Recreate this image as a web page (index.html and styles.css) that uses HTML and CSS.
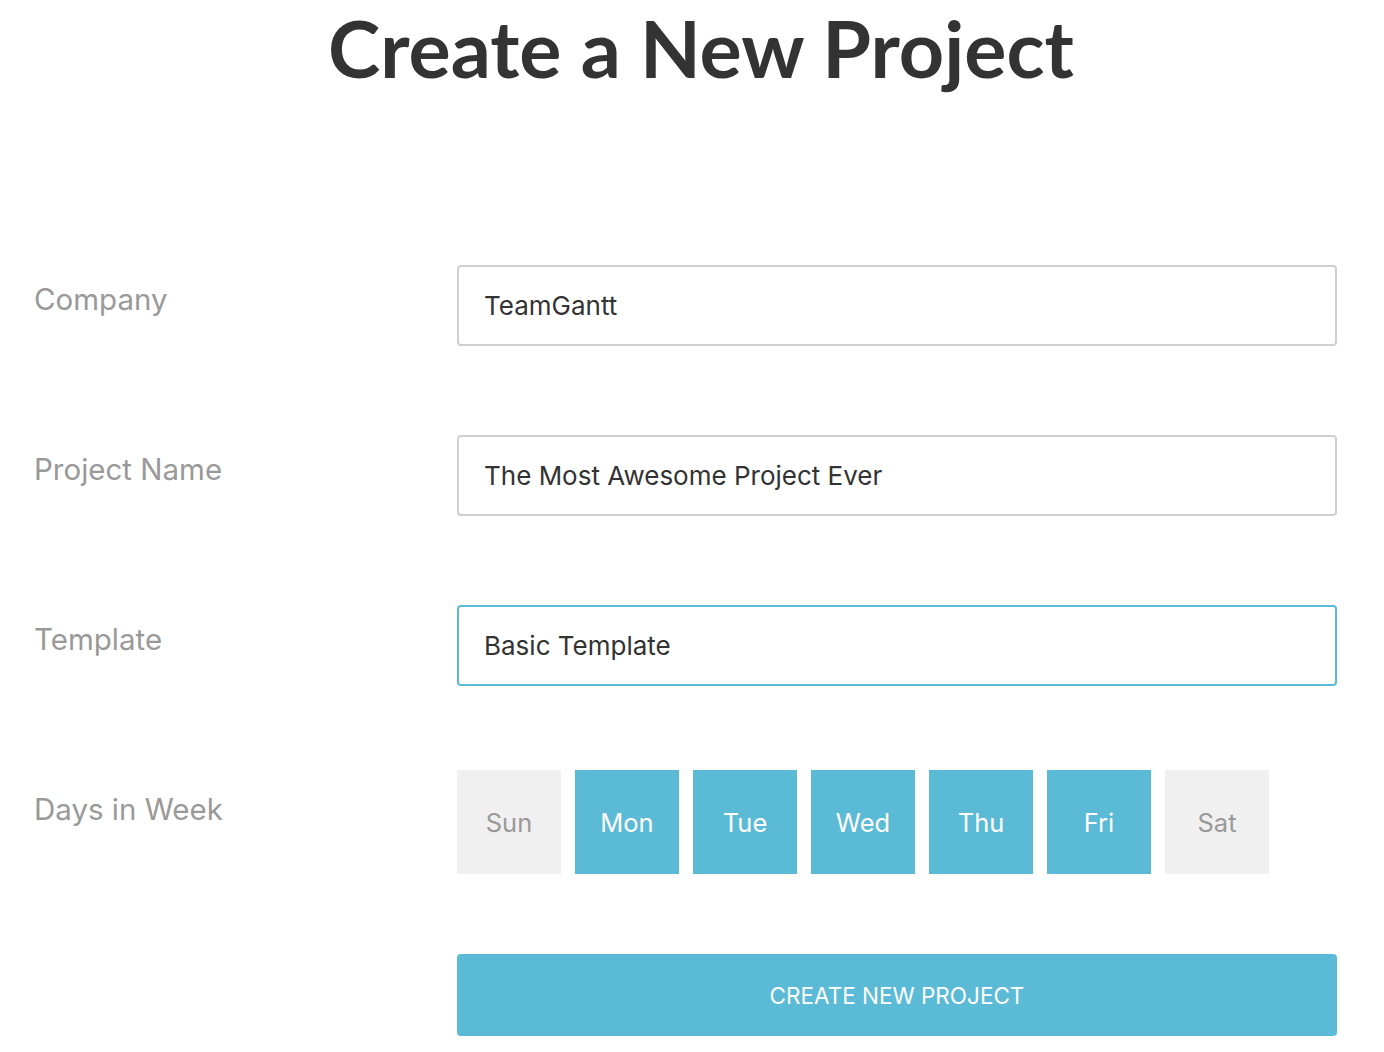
FILE: index.html
```html
<!DOCTYPE html>
<html>
<head>
<meta charset="utf-8">
<link rel="stylesheet" href="styles.css">
</head>
<body>
<div class="page">
  <h1 class="title">Create a New Project</h1>
  <form class="form">
    <div class="row">
      <label class="label">Company</label>
      <div class="field">TeamGantt</div>
    </div>
    <div class="row">
      <label class="label">Project Name</label>
      <div class="field">The Most Awesome Project Ever</div>
    </div>
    <div class="row">
      <label class="label">Template</label>
      <div class="field field-focus">Basic Template</div>
    </div>
    <div class="row row-days">
      <label class="label label-days">Days in Week</label>
      <div class="days">
        <div class="day">Sun</div>
        <div class="day day-on">Mon</div>
        <div class="day day-on">Tue</div>
        <div class="day day-on">Wed</div>
        <div class="day day-on">Thu</div>
        <div class="day day-on">Fri</div>
        <div class="day">Sat</div>
      </div>
    </div>
    <div class="row row-submit">
      <div></div>
      <div class="submit">CREATE NEW PROJECT</div>
    </div>
  </form>
</div>
</body>
</html>
```

FILE: styles.css
```css
html, body {
  margin: 0;
  padding: 0;
  background: #fff;
}
body {
  font-family: Inter, "Open Sans", sans-serif;
  color: #333;
}
.page {
  width: 1384px;
  height: 1052px;
  overflow: hidden;
}
.title {
  margin: 0;
  padding-top: 0;
  padding-left: 18px;
  text-align: center;
  font-family: Lato, sans-serif;
  font-size: 79px;
  line-height: 95px;
  font-weight: 700;
  color: #333;
}
.form {
  margin-top: 170px;
  padding-left: 34px;
  display: flex;
  flex-direction: column;
}
.row {
  display: grid;
  grid-template-columns: 423px 880px;
  margin-bottom: 89px;
}
.label {
  font-size: 29.5px;
  color: #999;
  padding-top: 16px;
  line-height: 36px;
}
.field {
  box-sizing: border-box;
  height: 81px;
  border: 2px solid #d0d0d0;
  border-radius: 4px;
  padding: 0 25px;
  display: flex;
  align-items: center;
  font-size: 26px;
  color: #333;
}
.field-focus {
  border-color: #5bbad5;
}
.row-days {
  margin-top: -5px;
  margin-bottom: 80px;
}
.label-days {
  padding-top: 21px;
}
.days {
  display: flex;
  gap: 14px;
}
.day {
  width: 104px;
  height: 104px;
  background: #f0f0f0;
  color: #999;
  font-size: 25.5px;
  display: flex;
  align-items: center;
  justify-content: center;
}
.day-on {
  background: #5bbad5;
  color: #fff;
}
.submit {
  height: 82px;
  border-radius: 4px;
  background: #5bbad5;
  color: #fff;
  font-size: 22.5px;
  display: flex;
  align-items: center;
  justify-content: center;
}
```
